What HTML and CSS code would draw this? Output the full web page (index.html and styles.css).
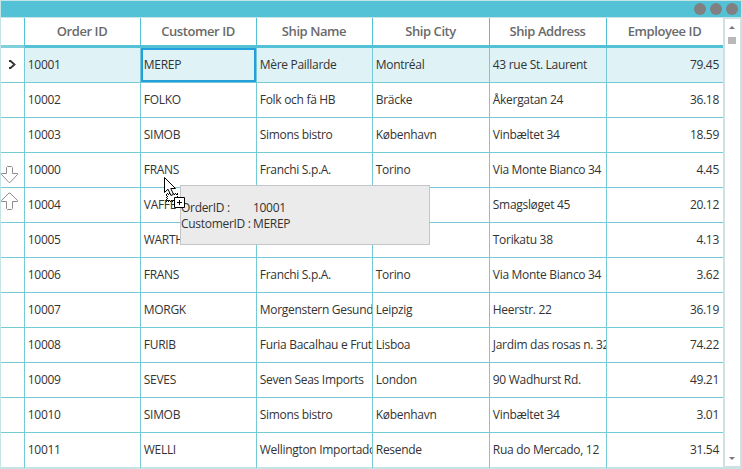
FILE: index.html
```html
<!DOCTYPE html>
<html lang="en">
<head>
<meta charset="utf-8">
<title>Orders</title>
<link rel="stylesheet" href="styles.css">
</head>
<body>
<div class="window">
  <header class="titlebar"><i class="dot"></i><i class="dot"></i><i class="dot"></i></header>
  <main class="content">
    <div class="grid">
      <div class="row head"><div></div><div>Order ID</div><div>Customer ID</div><div>Ship Name</div><div>Ship City</div><div>Ship Address</div><div>Employee ID</div></div>
      <div class="row selected"><div class="marker"><svg width="9" height="10" viewBox="0 0 9 10"><path d="M1 1H2.500L6.500 4.500L2.500 8H1" fill="none" stroke="#333" stroke-width="1.8"/></svg></div><div>10001</div><div class="current">MEREP</div><div>Mère Paillarde</div><div>Montréal</div><div>43 rue St. Laurent</div><div>79.45</div></div>
      <div class="row"><div></div><div>10002</div><div>FOLKO</div><div>Folk och fä HB</div><div>Bräcke</div><div>Åkergatan 24</div><div>36.18</div></div>
      <div class="row"><div></div><div>10003</div><div>SIMOB</div><div>Simons bistro</div><div>København</div><div>Vinbæltet 34</div><div>18.59</div></div>
      <div class="row"><div></div><div>10000</div><div>FRANS</div><div>Franchi S.p.A.</div><div>Torino</div><div>Via Monte Bianco 34</div><div>4.45</div></div>
      <div class="row"><div></div><div>10004</div><div>VAFFE</div><div></div><div></div><div>Smagsløget 45</div><div>20.12</div></div>
      <div class="row"><div></div><div>10005</div><div>WARTH</div><div></div><div></div><div>Torikatu 38</div><div>4.13</div></div>
      <div class="row"><div></div><div>10006</div><div>FRANS</div><div>Franchi S.p.A.</div><div>Torino</div><div>Via Monte Bianco 34</div><div>3.62</div></div>
      <div class="row"><div></div><div>10007</div><div>MORGK</div><div>Morgenstern Gesundkost</div><div>Leipzig</div><div>Heerstr. 22</div><div>36.19</div></div>
      <div class="row"><div></div><div>10008</div><div>FURIB</div><div>Furia Bacalhau e Frutos</div><div>Lisboa</div><div>Jardim das rosas n. 32</div><div>74.22</div></div>
      <div class="row"><div></div><div>10009</div><div>SEVES</div><div>Seven Seas Imports</div><div>London</div><div>90 Wadhurst Rd.</div><div>49.21</div></div>
      <div class="row"><div></div><div>10010</div><div>SIMOB</div><div>Simons bistro</div><div>København</div><div>Vinbæltet 34</div><div>3.01</div></div>
      <div class="row"><div></div><div>10011</div><div>WELLI</div><div>Wellington Importadora</div><div>Resende</div><div>Rua do Mercado, 12</div><div>31.54</div></div>
    </div>
    <div class="scrollbar">
      <svg width="6" height="3" viewBox="0 0 6 3"><path d="M0 3L3 0L6 3Z" fill="#777"/></svg>
      <div class="thumb"></div>
      <svg class="down" width="6" height="3" viewBox="0 0 6 3"><path d="M0 0L3 3L6 0Z" fill="#777"/></svg>
    </div>
  </main>
</div>
<svg class="drop-arrows" width="20" height="46" viewBox="0 0 20 46">
  <g fill="#fff" stroke="#8c8c8c" stroke-linejoin="round"><path d="M7.500 1.500H11.500L12.500 2.500V8.500H17.500V9.500L10 17.500H9L1.500 9.500V8.500H6.500V2.500Z"/><path d="M7.500 44.500H11.500L12.500 43.500V36.500H17.500V35.500L10 28H9L1.500 35.500V36.500H6.500V43.500Z"/></g>
</svg>
<div class="drag-tip">
  <div class="tip-line"><span>OrderID :</span><span>10001</span></div>
  <div class="tip-line"><span>CustomerID :</span><span>MEREP</span></div>
</div>
<svg class="pointer" width="24" height="34" viewBox="0 0 24 34">
  <path d="M3 16.500H15M2 17.500H14M3 23.500H10M2 24.500H10M2.500 18V24M3.500 19V24M13.500 17V20" fill="none" stroke="#000" stroke-dasharray="1 1"/>
  <path d="M.5 .5V15.500L4 12.200L7 18.500L9.500 17.300L6.800 11.500H11.500Z" fill="#fff" stroke="#000"/>
  <path d="M10.500 20.500H20.500V30.500H10.500Z" fill="#fff" stroke="#000"/>
  <path d="M13 25.500H18M15.500 23V28" stroke="#000"/>
</svg>
</body>
</html>
```
FILE: styles.css
```css
* { box-sizing: border-box; }
body {
  margin: 0;
  width: 742px;
  height: 469px;
  overflow: hidden;
  font: 12px/16px "Open Sans", sans-serif;
  letter-spacing: -0.3px;
  color: #333;
  background: #fff;
}
.window {
  height: 469px;
  display: flex;
  flex-direction: column;
  border: solid #c5e4e5;
  border-width: 1px 1px 2px;
}
.titlebar {
  height: 17px;
  flex: none;
  display: flex;
  justify-content: flex-end;
  align-items: center;
  gap: 4px;
  padding-right: 3px;
  background: #54c2d6;
  border-bottom: 1px solid #c5e4e5;
}
.dot { width: 12px; height: 12px; border-radius: 50%; background: #808080; }
.content { flex: 1; display: flex; min-height: 0; }
.grid { width: 722px; }
.row {
  display: grid;
  grid-template-columns: 24px 116px 116px 116px 117px 117px 116px;
  height: 35px;
}
.row > div {
  padding: 9px 0 0 2.8px;
  border-right: 1px solid #74cad7;
  border-bottom: 1px solid #74cad7;
  white-space: nowrap;
  overflow: hidden;
}
.row > div:last-child { border-right: 0; text-align: right; padding-right: 4px; }
.row:last-child > div { border-bottom: 0; }
.row.head { height: 30px; }
.row.head > div,
.row.head > div:last-child {
  padding: 4px 1px 0 0;
  text-align: center;
  font-size: 13px;
  line-height: 18px;
  font-weight: 600;
  letter-spacing: -0.42px;
  color: #6a6a6a;
  border-right-color: #54c2d6;
  border-bottom: 3px solid #54c2d6;
}
.row.head > div:first-child { border-bottom-color: #7fcfdc; }
.row.selected > div { background: #dff2f5; }
.row.selected > .marker { background: #fff; padding: 12px 0 0 7px; line-height: 0; }
.row.selected > .current {
  box-shadow: inset 0 0 0 2px #249fdb;
}
.scrollbar {
  width: 18px;
  display: flex;
  flex-direction: column;
  align-items: center;
  padding: 7px 2px 6px 0;
  border: solid #cfdfe2;
  border-width: 1px 1px 1px 2px;
}
.thumb { width: 8px; height: 7px; margin-top: 8px; background: #b8b8b8; }
.down { margin-top: auto; }
.drop-arrows { position: absolute; left: 0; top: 165px; }
.drag-tip {
  position: absolute;
  left: 180px;
  top: 185px;
  width: 250px;
  height: 60px;
  padding-top: 14px;
  background: #ebebeb;
  border: 1px solid #c3c5c6;
}
.tip-line { display: grid; grid-template-columns: 72px 1fr; white-space: nowrap; }
.pointer { position: absolute; left: 164px; top: 177px; }
```
